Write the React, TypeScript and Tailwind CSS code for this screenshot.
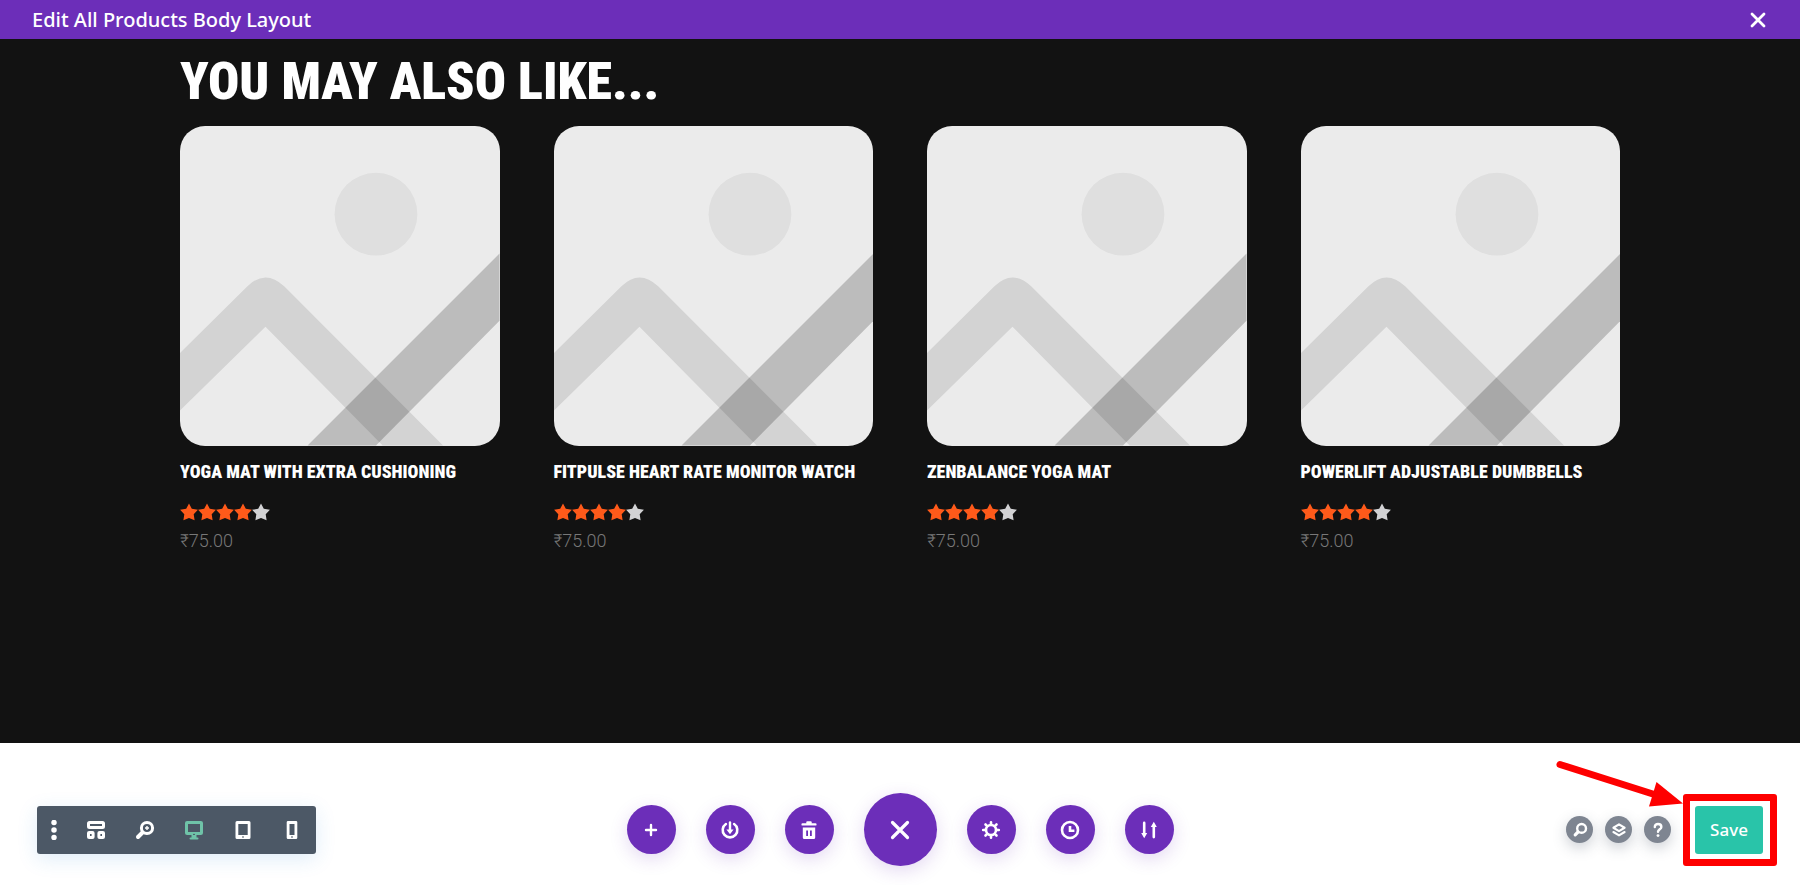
import type { ReactNode } from 'react';

const products = [
  { id: 1, name: 'Yoga Mat with Extra Cushioning', rating: 4, price: '₹75.00' },
  { id: 2, name: 'FitPulse Heart Rate Monitor Watch', rating: 4, price: '₹75.00' },
  { id: 3, name: 'ZenBalance Yoga Mat', rating: 4, price: '₹75.00' },
  { id: 4, name: 'PowerLift Adjustable Dumbbells', rating: 4, price: '₹75.00' },
];

function Icon({ size = 20, children }: { size?: number; children: ReactNode }) {
  return (
    <svg width={size} height={size} viewBox="0 0 20 20" fill="none" stroke="currentColor" aria-hidden="true">
      {children}
    </svg>
  );
}

const viewTools = [
  {
    key: 'wireframe',
    label: 'Wireframe view',
    icon: (
      <Icon>
        <rect x="2.5" y="2.5" width="15" height="5" rx="1" strokeWidth="3" />
        <rect x="2.5" y="12.5" width="4.6" height="5" rx="0.6" strokeWidth="3" />
        <rect x="12.9" y="12.5" width="4.6" height="5" rx="0.6" strokeWidth="3" />
      </Icon>
    ),
  },
  {
    key: 'zoom',
    label: 'Zoom',
    icon: (
      <Icon>
        <circle cx="12" cy="8" r="5.6" strokeWidth="3" />
        <path d="M7.5 12.5 3 17" strokeWidth="4" strokeLinecap="round" />
        <path d="M12 6v4M10 8h4" strokeWidth="1.4" />
      </Icon>
    ),
  },
  {
    key: 'desktop',
    label: 'Desktop view',
    icon: (
      <Icon>
        <rect x="2.5" y="2.5" width="15" height="11" rx="0.6" strokeWidth="3" />
        <path d="M10 14v4" strokeWidth="5" />
        <path d="M6.5 18.4h7" strokeWidth="2" strokeLinecap="round" />
        <path d="M9 14.4h2" strokeWidth="1" stroke="#4c5866" />
      </Icon>
    ),
  },
  {
    key: 'tablet',
    label: 'Tablet view',
    icon: (
      <Icon>
        <path
          d="M4 1h12a1.5 1.5 0 0 1 1.5 1.5v15A1.5 1.5 0 0 1 16 19H4a1.5 1.5 0 0 1-1.5-1.5v-15A1.5 1.5 0 0 1 4 1Zm1.3 3v11h9.4V4Z"
          fill="currentColor"
          fillRule="evenodd"
          stroke="none"
        />
        <path d="M9 17h2" strokeWidth="1.2" stroke="#4c5866" />
      </Icon>
    ),
  },
  {
    key: 'phone',
    label: 'Phone view',
    icon: (
      <Icon>
        <path
          d="M6 1h8a1.3 1.3 0 0 1 1.3 1.3v15.4A1.3 1.3 0 0 1 14 19H6a1.3 1.3 0 0 1-1.3-1.3V2.3A1.3 1.3 0 0 1 6 1Zm1.5 3v11h5V4Z"
          fill="currentColor"
          fillRule="evenodd"
          stroke="none"
        />
        <path d="M9 17h2" strokeWidth="1.2" stroke="#4c5866" />
      </Icon>
    ),
  },
];

const leftActions = [
  {
    label: 'Load from library',
    icon: (
      <Icon>
        <path d="M10 5v10M5 10h10" strokeWidth="2.4" strokeLinecap="round" />
      </Icon>
    ),
  },
  {
    label: 'Save to library',
    icon: (
      <Icon>
        <path d="M5.9 4A7.3 7.3 0 1 0 14.1 4" strokeWidth="2.6" strokeLinecap="round" />
        <path d="M10 2.5v9" strokeWidth="2.4" strokeLinecap="round" />
        <path d="M6.4 9.5h7.2L10 14.2Z" fill="currentColor" stroke="none" />
      </Icon>
    ),
  },
  {
    label: 'Clear layout',
    icon: (
      <Icon>
        <path d="M3.6 4.4h12.8M8.4 2.4h3.2" strokeWidth="2.4" strokeLinecap="round" />
        <path
          d="M3.8 7.6h12.4v9.9a1.5 1.5 0 0 1-1.5 1.5H5.3a1.5 1.5 0 0 1-1.5-1.5Zm3.4 3v5.4h1.8v-5.4Zm3.8 0v5.4h1.8v-5.4Z"
          fill="currentColor"
          fillRule="evenodd"
          stroke="none"
        />
      </Icon>
    ),
  },
];

const rightActions = [
  {
    label: 'Page settings',
    icon: (
      <Icon>
        <circle cx="10" cy="10" r="5" strokeWidth="2.6" />
        <path
          d="M10 2.2v2.5M10 15.3v2.5M2.2 10h2.5M15.3 10h2.5M4.5 4.5l1.7 1.7M13.8 13.8l1.7 1.7M4.5 15.5l1.7-1.7M13.8 6.2l1.7-1.7"
          strokeWidth="2.6"
          strokeLinecap="round"
        />
      </Icon>
    ),
  },
  {
    label: 'Editing history',
    icon: (
      <Icon>
        <circle cx="10" cy="10" r="8" strokeWidth="2.6" />
        <path d="M10 6v4.8h4.4" strokeWidth="2.6" />
      </Icon>
    ),
  },
  {
    label: 'Portability',
    icon: (
      <Icon>
        <path d="M5.2 2.9v11M14.8 17.1v-11" strokeWidth="2.6" strokeLinecap="round" />
        <path d="M2.2 13h6L5.2 18.3ZM11.8 7h6l-3-5.3Z" fill="currentColor" stroke="none" />
      </Icon>
    ),
  },
];

const helpers = [
  {
    label: 'Search',
    icon: (
      <Icon size={16}>
        <circle cx="12" cy="8" r="5.5" strokeWidth="3" />
        <path d="M7.5 12.5 4 16" strokeWidth="4" strokeLinecap="round" />
      </Icon>
    ),
  },
  {
    label: 'Layers',
    icon: (
      <Icon size={16}>
        <path d="M10 3 17 7.2 10 11.4 3 7.2Z" strokeWidth="2.6" strokeLinejoin="round" />
        <path d="M3 12.5 10 16.7l7-4.2" strokeWidth="2.6" strokeLinecap="round" strokeLinejoin="round" />
      </Icon>
    ),
  },
  {
    label: 'Help',
    icon: (
      <Icon size={16}>
        <path d="M6 6.2C6 3.7 7.8 2.5 10 2.5s4.2 1.3 4.2 3.6C14.2 9 10 9.2 10 12.3" strokeWidth="3" strokeLinecap="round" />
        <circle cx="10" cy="17" r="1.8" fill="currentColor" stroke="none" />
      </Icon>
    ),
  },
];

function PlaceholderImage() {
  return (
    <svg viewBox="0 0 957 957" className="block w-full rounded-[25px] bg-[#ebebeb]" role="img" aria-label="Product placeholder">
      <circle cx="587" cy="264" r="124" fillOpacity="0.05" />
      <path d="M0 680 202 480Q256 427 312 480L788 957H607L256 601 0 852Z" fillOpacity="0.1" />
      <path d="M957 382 382 957H587L957 583Z" fillOpacity="0.2" />
    </svg>
  );
}

function Rating({ value }: { value: number }) {
  return (
    <div className="flex" role="img" aria-label={`Rated ${value} out of 5`}>
      {[1, 2, 3, 4, 5].map((n) => (
        <svg
          key={n}
          viewBox="0 0 18 18"
          className={`w-[18px] h-[18px] ${n <= value ? 'text-[#ff5a1a]' : 'text-[#d2d2d4]'}`}
          fill="currentColor"
        >
          <path d="M9 .4l2.8 5.4 6.1 1-4.2 4.5.9 6L9 14.9l-5.6 2.4.9-6L.1 6.8l6.1-1Z" />
        </svg>
      ))}
    </div>
  );
}

function ActionButton({ label, children }: { label: string; children: ReactNode }) {
  return (
    <button
      aria-label={label}
      className="flex items-center justify-center w-[49px] h-[49px] rounded-full bg-[#6c2eb9] text-white shadow-[0_5px_18px_rgba(108,46,185,0.18)]"
    >
      {children}
    </button>
  );
}

export default function App() {
  return (
    <div className="min-h-screen flex flex-col bg-white font-['Noto_Sans',sans-serif]">
      {/* Title bar */}
      <header className="flex items-center justify-between h-[39px] pl-8 pr-[30px] bg-[#6c2eb9] text-white">
        <h1 className="text-xl font-medium">Edit All Products Body Layout</h1>
        <button aria-label="Close" className="p-0.5">
          <svg width="20" height="20" viewBox="0 0 20 20" stroke="currentColor" strokeWidth="2.8" strokeLinecap="round">
            <path d="M4 4l12 12M16 4 4 16" />
          </svg>
        </button>
      </header>

      {/* Related products */}
      <main className="flex-1 bg-[#121212] text-white">
        <section className="w-4/5 mx-auto pt-2">
          <h2 className="font-['Roboto_Condensed',sans-serif] font-black text-[52px] leading-[70px] mb-[9px] uppercase whitespace-nowrap">
            You may also like...
          </h2>
          <ul className="grid grid-cols-4 gap-[54px]">
            {products.map((product) => (
              <li key={product.id}>
                <PlaceholderImage />
                <h3 className="font-['Roboto_Condensed',sans-serif] font-black text-lg leading-6 mt-3.5 mb-[19px] uppercase whitespace-nowrap">
                  {product.name}
                </h3>
                <Rating value={product.rating} />
                <p className="mt-2 font-['Roboto',sans-serif] font-light text-lg leading-6 text-[#787878]">{product.price}</p>
              </li>
            ))}
          </ul>
        </section>
      </main>

      {/* Builder bar */}
      <footer className="grid grid-cols-[1fr_auto_1fr] items-center px-[37px] pt-[50px] pb-[19px]">
        <div className="flex items-center w-fit h-12 rounded-[3px] bg-[#4c5866] text-white shadow-[0_5px_20px_rgba(43,135,218,0.15)]">
          <button aria-label="More options" className="flex items-center justify-center w-[34px] h-12">
            <Icon>
              <path d="M10 2.5h0M10 10h0M10 17.5h0" strokeWidth="5.5" strokeLinecap="round" />
            </Icon>
          </button>
          {viewTools.map((tool) => (
            <button
              key={tool.key}
              aria-label={tool.label}
              className={`flex items-center justify-center w-[49px] h-12 ${tool.key === 'desktop' ? 'text-[#6fc3a8]' : ''}`}
            >
              {tool.icon}
            </button>
          ))}
        </div>

        <div className="flex items-center gap-[30px]">
          {leftActions.map((a) => (
            <ActionButton key={a.label} label={a.label}>{a.icon}</ActionButton>
          ))}
          <button
            aria-label="Collapse settings"
            className="flex items-center justify-center w-[73px] h-[73px] rounded-full bg-[#6c2eb9] text-white shadow-[0_5px_18px_rgba(108,46,185,0.18)]"
          >
            <Icon>
              <path d="M2.5 2.5l15 15M17.5 2.5l-15 15" strokeWidth="3.2" strokeLinecap="round" />
            </Icon>
          </button>
          {rightActions.map((a) => (
            <ActionButton key={a.label} label={a.label}>{a.icon}</ActionButton>
          ))}
        </div>

        <div className="flex items-center justify-end gap-3">
          {helpers.map((h) => (
            <button
              key={h.label}
              aria-label={h.label}
              className="flex items-center justify-center w-[27px] h-[27px] rounded-full bg-[#7e8591] text-white shadow-[0_5px_14px_rgba(60,70,90,0.25)]"
            >
              {h.icon}
            </button>
          ))}
          <div className="relative ml-3">
            <button className="block w-[68px] h-12 rounded-[3px] bg-[#29c4a9] text-white text-[17px] font-medium">Save</button>
            {/* Callout frame and arrow */}
            <span className="absolute -left-3 -right-3.5 -inset-y-3 border-[7px] border-[#fe0000] rounded-[3px] pointer-events-none" />
            <svg
              width="130"
              height="54"
              viewBox="0 0 130 54"
              className="absolute right-[79px] bottom-[46px] pointer-events-none"
              aria-hidden="true"
            >
              <path d="M6 10.5 102 41" stroke="#fe0000" strokeWidth="7" strokeLinecap="round" />
              <path d="M102.5 28 129 49.5 95 52.5Z" fill="#fe0000" />
            </svg>
          </div>
        </div>
      </footer>
    </div>
  );
}
